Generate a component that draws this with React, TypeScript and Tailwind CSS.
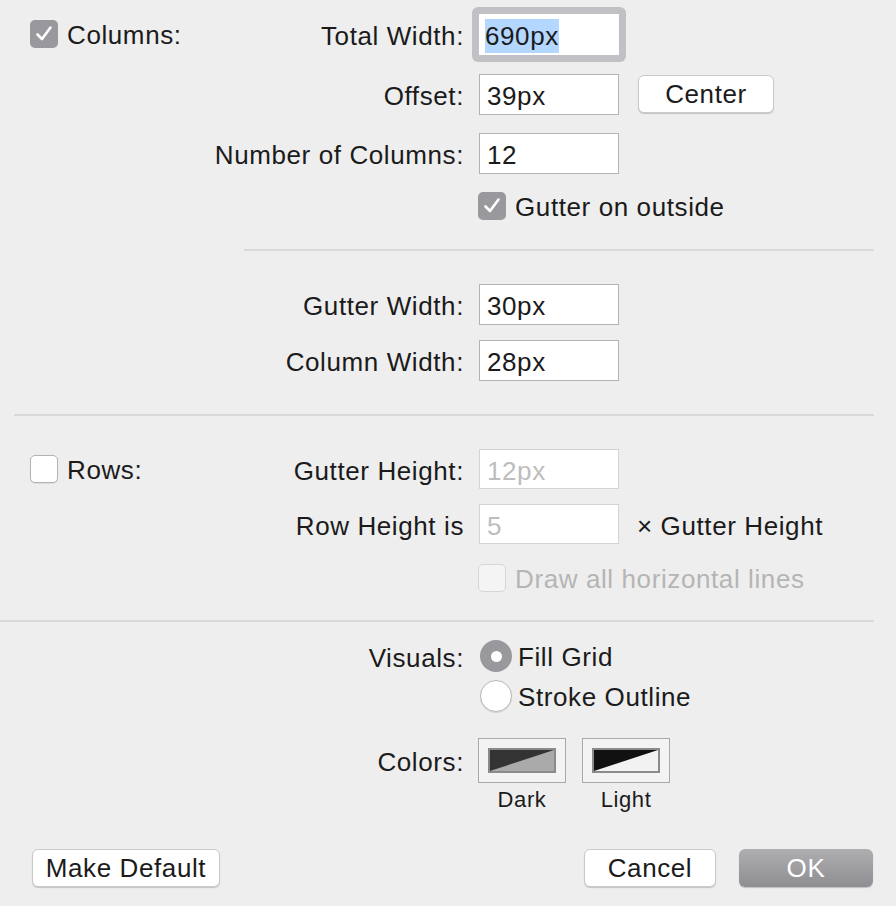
import React from 'react';

const Check = ({ on = false, disabled = false }: { on?: boolean; disabled?: boolean }) => {
  if (on) {
    return (
      <span className="w-[28px] h-[28px] rounded-[5px] bg-[#98989d] flex items-center justify-center shrink-0">
        <svg width="20" height="20" viewBox="0 0 20 20" fill="none">
          <path d="M3.5 10.5 L8 15 L16.5 3.5" stroke="#ffffff" strokeWidth="2.6" strokeLinecap="round" strokeLinejoin="round" />
        </svg>
      </span>
    );
  }
  return (
    <span
      className={
        disabled
          ? 'w-[28px] h-[28px] rounded-[5px] bg-[#f4f4f4] border border-[#d6d6d6] shrink-0'
          : 'w-[28px] h-[28px] rounded-[5px] bg-white border border-[#b3b3b3] shadow-[0_1px_1px_rgba(0,0,0,0.08)] shrink-0'
      }
    />
  );
};

const Field = ({ value, disabled = false }: { value: string; disabled?: boolean }) => (
  <div
    className={
      disabled
        ? 'w-[140px] h-[40px] bg-white border border-[#d4d4d4] flex items-center px-[7px] pt-[4px] text-[#bdbdbd]'
        : 'w-[140px] h-[41px] bg-white border border-[#b3b3b3] flex items-center px-[7px] pt-[4px] text-[#1b1b1b]'
    }
  >
    {value}
  </div>
);

const Label = ({ children, left }: { children?: React.ReactNode; left?: React.ReactNode }) => (
  <div className="w-[464px] flex items-center shrink-0">
    <div className="pl-[30px] flex items-center gap-[9px]">{left}</div>
    <div className="flex-1 text-right pt-[4px]">{children}</div>
  </div>
);

const Btn = ({ children, className = '' }: { children: React.ReactNode; className?: string }) => (
  <div
    className={
      'h-[38px] rounded-[6px] bg-white border border-[#c9c9c9] shadow-[0_1px_1px_rgba(0,0,0,0.18)] flex items-center justify-center text-[#1b1b1b] ' +
      className
    }
  >
    {children}
  </div>
);

const Well = ({ tl, br, name }: { tl: string; br: string; name: string }) => (
  <div className="flex flex-col items-center">
    <div className="w-[88px] h-[45px] bg-[#f3f3f3] border-[1.5px] border-[#a9a9a9] flex items-center justify-center">
      <div className="w-[68px] h-[25px] border-2 border-[#8a8a8a] relative overflow-hidden" style={{ background: br }}>
        <svg className="absolute inset-0" width="100%" height="100%" viewBox="0 0 100 100" preserveAspectRatio="none">
          <polygon points="0,0 100,0 0,100" fill={tl} />
        </svg>
      </div>
    </div>
    <div className="mt-[5px] h-[24px] text-[22px] leading-[24px] text-[#1b1b1b]">{name}</div>
  </div>
);

export default function App() {
  return (
    <div className="w-[896px] h-[906px] bg-[#eeeeee] overflow-hidden text-[26px] tracking-[0.6px] text-[#1b1b1b] font-['Liberation_Sans',Arial,sans-serif] flex flex-col">
      {/* Columns */}
      <div className="mt-[6px] h-[56px] flex items-center">
        <Label left={<><Check on /><span className="pt-[3px]">Columns:</span></>}>Total Width:</Label>
        <div className="ml-[8px] p-[7px] bg-[#c1c1c5] rounded-[6px]">
          <div className="w-[140px] h-[41px] bg-white flex items-center px-[6px] pt-[4px]">
            <span className="bg-[#b3d7ff] leading-[34px]">690px</span>
          </div>
        </div>
      </div>

      <div className="mt-[11px] h-[42px] flex items-center">
        <Label>Offset:</Label>
        <div className="ml-[15px] flex items-center gap-[19px]">
          <Field value="39px" />
          <Btn className="w-[136px]">Center</Btn>
        </div>
      </div>

      <div className="mt-[18px] h-[41px] flex items-center">
        <Label>Number of Columns:</Label>
        <div className="ml-[15px]">
          <Field value="12" />
        </div>
      </div>

      <div className="mt-[18px] h-[28px] flex items-center">
        <Label />
        <div className="ml-[14px] flex items-center gap-[9px]">
          <Check on />
          <span className="pt-[2px]">Gutter on outside</span>
        </div>
      </div>

      <div className="mt-[29px] ml-[244px] w-[630px] h-[2px] bg-[#d9d9d9]" />

      <div className="mt-[33px] h-[41px] flex items-center">
        <Label>Gutter Width:</Label>
        <div className="ml-[15px]">
          <Field value="30px" />
        </div>
      </div>

      <div className="mt-[15px] h-[41px] flex items-center">
        <Label>Column Width:</Label>
        <div className="ml-[15px]">
          <Field value="28px" />
        </div>
      </div>

      {/* Rows */}
      <div className="mt-[33px] ml-[14px] w-[860px] h-[2px] bg-[#d9d9d9]" />

      <div className="mt-[33px] h-[40px] flex items-center">
        <Label left={<><Check /><span className="pt-[3px]">Rows:</span></>}>Gutter Height:</Label>
        <div className="ml-[15px]">
          <Field value="12px" disabled />
        </div>
      </div>

      <div className="mt-[15px] h-[40px] flex items-center">
        <Label>Row Height is</Label>
        <div className="ml-[15px] flex items-center gap-[18px]">
          <Field value="5" disabled />
          <span className="pt-[4px]">× Gutter Height</span>
        </div>
      </div>

      <div className="mt-[20px] h-[28px] flex items-center">
        <Label />
        <div className="ml-[14px] flex items-center gap-[9px] text-[#b5b5b5]">
          <Check disabled />
          <span className="pt-[2px]">Draw all horizontal lines</span>
        </div>
      </div>

      {/* Visuals */}
      <div className="mt-[28px] w-[874px] h-[2px] bg-[#d9d9d9]" />

      <div className="mt-[18px] h-[32px] flex items-center">
        <Label>Visuals:</Label>
        <div className="ml-[16px] flex items-center gap-[6px]">
          <span className="w-[32px] h-[32px] rounded-full bg-[#98989d] flex items-center justify-center">
            <span className="w-[11px] h-[11px] rounded-full bg-white" />
          </span>
          <span className="pt-[2px]">Fill Grid</span>
        </div>
      </div>

      <div className="mt-[8px] h-[32px] flex items-center">
        <Label />
        <div className="ml-[16px] flex items-center gap-[6px]">
          <span className="w-[32px] h-[32px] rounded-full bg-white border border-[#b8b8b8] shadow-[0_1px_1px_rgba(0,0,0,0.1)]" />
          <span className="pt-[2px]">Stroke Outline</span>
        </div>
      </div>

      <div className="mt-[26px] flex items-start">
        <div className="w-[464px] h-[45px] flex items-center justify-end shrink-0 pt-[4px]">Colors:</div>
        <div className="ml-[14px] flex items-start gap-[16px]">
          <Well tl="#333333" br="#aaaaaa" name="Dark" />
          <Well tl="#111111" br="#f2f2f2" name="Light" />
        </div>
      </div>

      {/* Footer buttons */}
      <div className="mt-[37px] flex items-center justify-between pl-[32px] pr-[23px]">
        <Btn className="w-[188px]">Make Default</Btn>
        <div className="flex items-center gap-[23px]">
          <Btn className="w-[132px]">Cancel</Btn>
          <div className="w-[134px] h-[38px] rounded-[6px] bg-[linear-gradient(#aeaeb1,#8e8e92)] shadow-[0_1px_1px_rgba(0,0,0,0.2)] flex items-center justify-center text-white">
            OK
          </div>
        </div>
      </div>
    </div>
  );
}
